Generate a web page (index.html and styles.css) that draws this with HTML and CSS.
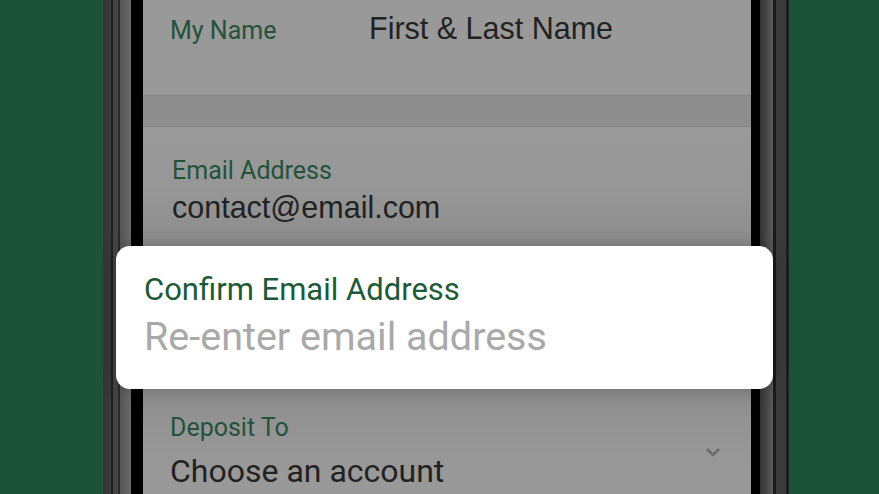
FILE: index.html
```html
<!DOCTYPE html>
<html lang="en">
<head>
  <meta charset="UTF-8" />
  <meta name="viewport" content="width=device-width, initial-scale=1.0"/>
  <title>Direct Deposit Form</title>
  <link rel="stylesheet" href="styles.css">
</head>
<body>
  <div class="phone">
    <div class="bezel-left"></div>
    <div class="screen">
      <div class="row name-row">
        <span class="label">My Name</span>
        <span class="value arial">First &amp; Last Name</span>
      </div>
      <div class="divider"></div>
      <div class="field email-field">
        <div class="label">Email Address</div>
        <div class="value arial">contact@email.com</div>
      </div>
      <div class="field deposit-field">
        <div class="label">Deposit To</div>
        <div class="select-row">
          <span class="value">Choose an account</span>
          <svg class="chevron" width="16" height="10" viewBox="0 0 16 10">
            <path d="M2 2 L8 8 L14 2" fill="none" stroke="#6c6c6c" stroke-width="2.6"/>
          </svg>
        </div>
      </div>
    </div>
    <div class="bezel-right"></div>

    <div class="focus-card">
      <div class="card-label">Confirm Email Address</div>
      <input class="card-input" type="email" placeholder="Re-enter email address" />
    </div>
  </div>
</body>
</html>
```

FILE: styles.css
```css
:root {
  --bg: #1c5338;
  --dim: #999999;
  --label: #24523a;
  --text: #222222;
}
body {
  margin: 0;
  padding: 0;
  background: var(--bg);
  font-family: Roboto, "Noto Sans", sans-serif;
  overflow: hidden;
}
.phone {
  position: relative;
  display: flex;
  margin-left: 103px;
  width: 686px;
  height: 494px;
}
.bezel-left {
  width: 40px;
  background: linear-gradient(to right,
    #353535 0, #3a3a3a 8px, #1e1e1e 8px, #1e1e1e 10px,
    #444 10px, #444 15px, #2a2a2a 15px, #2a2a2a 17px,
    #555 17px, #6a6a6a 28px, #000 28px);
}
.bezel-right {
  width: 38px;
  background: linear-gradient(to right,
    #000 0, #000 9px, #333 9px, #5a5a5a 22px,
    #1a1a1a 22px, #1a1a1a 25px, #3a3a3a 25px, #3a3a3a 35px,
    #1e1e1e 35px);
}
.screen {
  width: 608px;
  background: var(--dim);
  display: flex;
  flex-direction: column;
}
.label {
  color: var(--label);
  font-size: 25px;
}
.value {
  color: var(--text);
  font-size: 32px;
}
.arial {
  font-family: "Liberation Sans", Arial, sans-serif;
  font-size: 30.5px;
}
.name-row {
  display: flex;
  align-items: baseline;
  height: 95px;
  padding: 11px 0 0 27px;
  box-sizing: border-box;
}
.name-row .label {
  width: 199px;
}
.divider {
  height: 30px;
  background: #8e8e8e;
  border-top: 1px solid #868686;
  border-bottom: 1px solid #868686;
}
.field {
  padding-left: 29px;
}
.email-field {
  height: 118px;
  padding-top: 29px;
  box-sizing: border-box;
  background: linear-gradient(to bottom, #9a9a9a 0, #979797 60px, #8c8c8c 118px);
}
.email-field .value {
  margin-top: 5px;
}
.deposit-field {
  flex: 1;
  padding-left: 27px;
  padding-top: 168px;
  background: linear-gradient(to bottom, #8a8a8a 143px, #939393 175px, #999 230px);
}
.select-row {
  display: flex;
  align-items: center;
  justify-content: space-between;
  padding-right: 30px;
  margin-top: 10px;
}
.chevron {
  margin-top: -38px;
}
.focus-card {
  position: absolute;
  left: 13px;
  top: 246px;
  width: 657px;
  height: 143px;
  box-sizing: border-box;
  padding: 25px 28px 0;
  background: #fff;
  border-radius: 14px;
  box-shadow: 0 0 16px rgba(0,0,0,0.22);
}
.card-label {
  color: #1d5a37;
  font-size: 31px;
}
.card-input {
  display: block;
  width: 100%;
  margin-top: 5px;
  padding: 0;
  border: none;
  outline: none;
  background: transparent;
  font-family: Roboto, "Noto Sans", sans-serif;
  font-size: 39.5px;
  color: var(--text);
}
.card-input::placeholder {
  color: #a9a9a9;
}
```
